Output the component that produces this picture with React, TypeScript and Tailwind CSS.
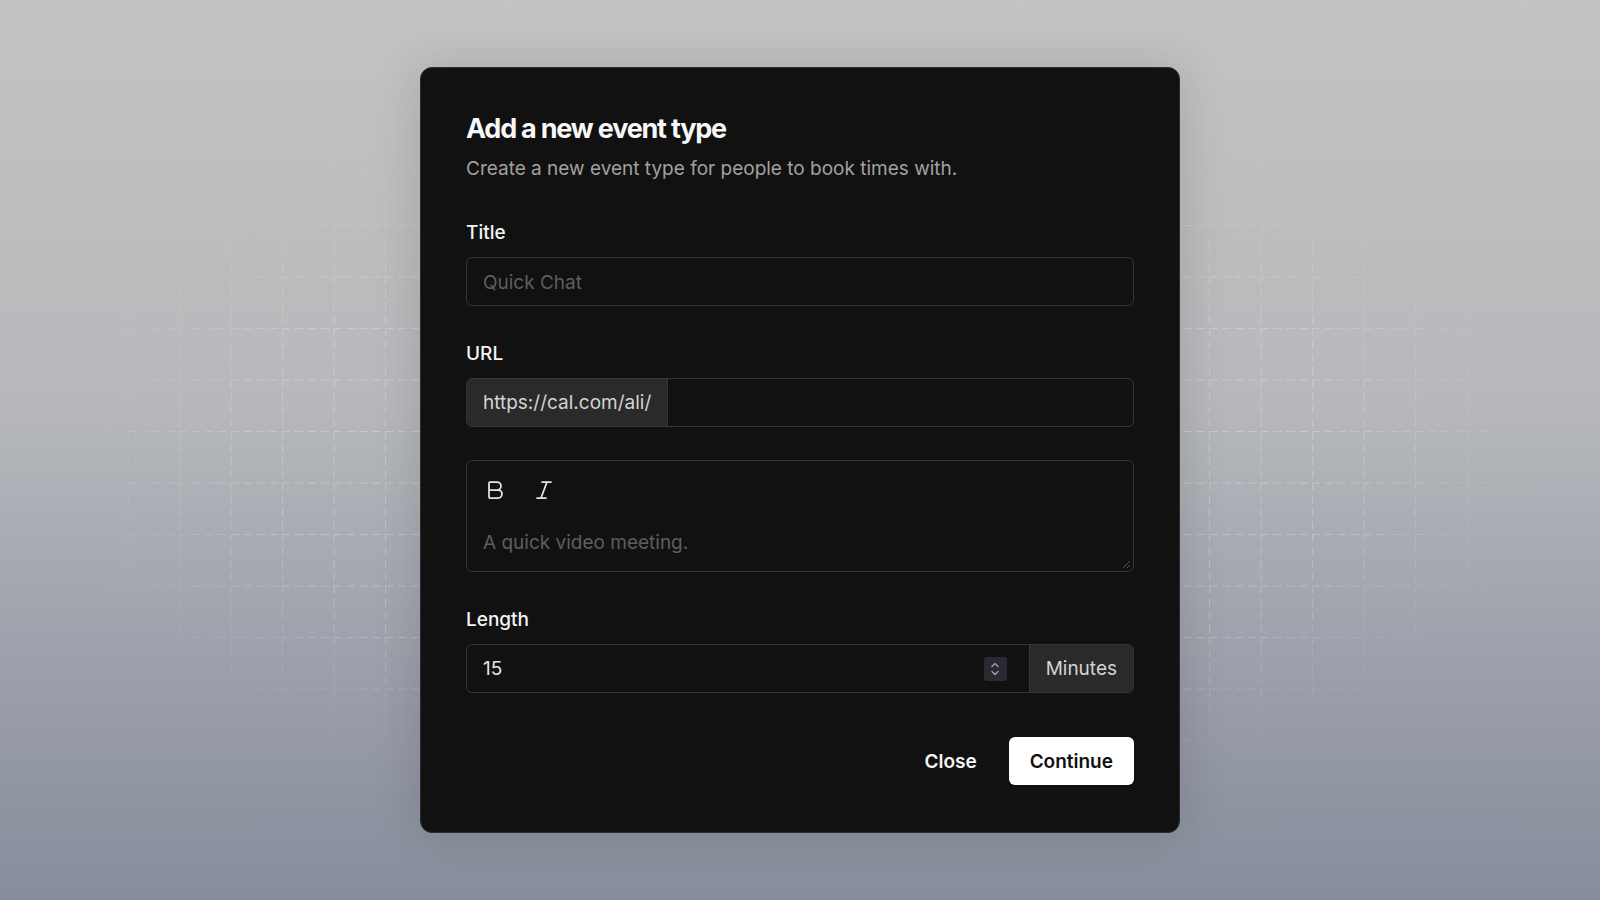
import { Bold, Italic } from "lucide-react";

const GridBackdrop = () => (
  <svg className="pointer-events-none absolute inset-0 h-full w-full" aria-hidden="true">
    <defs>
      <pattern id="grid" x="24.6" y="19" width="51.5" height="51.5" patternUnits="userSpaceOnUse">
        <line x1="0" y1="0.5" x2="51.5" y2="0.5" stroke="#ffffff" strokeWidth="1" strokeDasharray="8 5" />
        <line x1="0.5" y1="0" x2="0.5" y2="51.5" stroke="#ffffff" strokeWidth="1" strokeDasharray="8 5" />
      </pattern>
      <radialGradient id="fade" cx="50%" cy="50%" r="55%">
        <stop offset="0%" stopColor="#fff" stopOpacity="1" />
        <stop offset="70%" stopColor="#fff" stopOpacity="0.75" />
        <stop offset="100%" stopColor="#fff" stopOpacity="0" />
      </radialGradient>
      <mask id="gridMask">
        <rect x="90" y="110" width="1420" height="690" fill="url(#fade)" />
      </mask>
    </defs>
    <rect width="100%" height="100%" fill="url(#grid)" opacity="0.32" mask="url(#gridMask)" />
  </svg>
);

const Label = ({ children }: { children: React.ReactNode }) => (
  <label className="block text-[19px] leading-6 font-medium text-[#f4f4f5]">{children}</label>
);

const Spinner = () => (
  <div className="flex h-6 w-[23px] items-center justify-center rounded-[3px] bg-[#2a2a33]">
    <svg width="10" height="16" viewBox="0 0 10 16" fill="none" stroke="#a1a1aa" strokeWidth="1.4" strokeLinecap="round" strokeLinejoin="round">
      <path d="M2 5.5 5 2.5 8 5.5" />
      <path d="M2 10.5 5 13.5 8 10.5" />
    </svg>
  </div>
);

export default function App() {
  return (
    <div className="relative flex h-[900px] w-full items-center justify-center overflow-hidden bg-[linear-gradient(180deg,#c3c3c3_0%,#b6b8bb_45%,#9a9faa_75%,#878d9b_100%)] font-['Inter',sans-serif]">
      <GridBackdrop />

      <div className="relative w-[760px] rounded-xl border border-[#2b2b2b] bg-[#111111] px-[45px] pt-[46px] pb-[47px] shadow-[0_0_50px_rgba(0,0,0,0.14)]">
        <h2 className="text-[27px] leading-[30px] font-bold tracking-[-0.045em] text-[#f7f7f7]">Add a new event type</h2>
        <p className="mt-[13px] text-[19px] leading-6 text-[#a1a1a1]">Create a new event type for people to book times with.</p>

        {/* Title */}
        <div className="mt-10">
          <Label>Title</Label>
          <div className="mt-3 flex h-[49px] items-center rounded-md border border-[#363636] px-4 pt-[3px]">
            <span className="text-[19px] text-[#5e5e5e]">Quick Chat</span>
          </div>
        </div>

        {/* URL */}
        <div className="mt-9">
          <Label>URL</Label>
          <div className="mt-3 flex h-[49px] overflow-hidden rounded-md border border-[#363636]">
            <div className="flex items-center border-r border-[#363636] bg-[#2a2a2a] px-4 pt-[2px]">
              <span className="text-[19px] text-[#d4d4d4]">https://cal.com/ali/</span>
            </div>
            <div className="flex-1" />
          </div>
        </div>

        {/* Description editor */}
        <div className="relative mt-[33px] h-[112px] rounded-md border border-[#363636] px-4 pt-[17px]">
          <div className="flex items-center gap-[25px] text-[#e5e5e5]">
            <Bold size={24} strokeWidth={1.75} />
            <Italic size={24} strokeWidth={1.75} />
          </div>
          <p className="mt-[29px] text-[19px] leading-6 text-[#5e5e5e]">A quick video meeting.</p>
          <svg className="absolute right-[2px] bottom-[2px]" width="9" height="9" viewBox="0 0 9 9" stroke="#555" strokeWidth="1">
            <path d="M8 1 1 8" />
            <path d="M8 5 5 8" />
          </svg>
        </div>

        {/* Length */}
        <div className="mt-9">
          <Label>Length</Label>
          <div className="mt-3 flex h-[49px] overflow-hidden rounded-md border border-[#363636]">
            <div className="flex flex-1 items-center justify-between pr-[22px] pl-4">
              <span className="pt-[2px] text-[19px] text-[#e5e5e5]">15</span>
              <Spinner />
            </div>
            <div className="flex items-center border-l border-[#363636] bg-[#2a2a2a] px-4 pt-[2px]">
              <span className="text-[19px] text-[#d4d4d4]">Minutes</span>
            </div>
          </div>
        </div>

        {/* Actions */}
        <div className="mt-11 flex items-center justify-end gap-8">
          <button className="pt-[2px] text-[19px] font-semibold text-[#f4f4f5]">Close</button>
          <button className="h-12 rounded-md bg-white px-[21px] pt-[2px] text-[19px] font-semibold text-[#111111]">Continue</button>
        </div>
      </div>
    </div>
  );
}
